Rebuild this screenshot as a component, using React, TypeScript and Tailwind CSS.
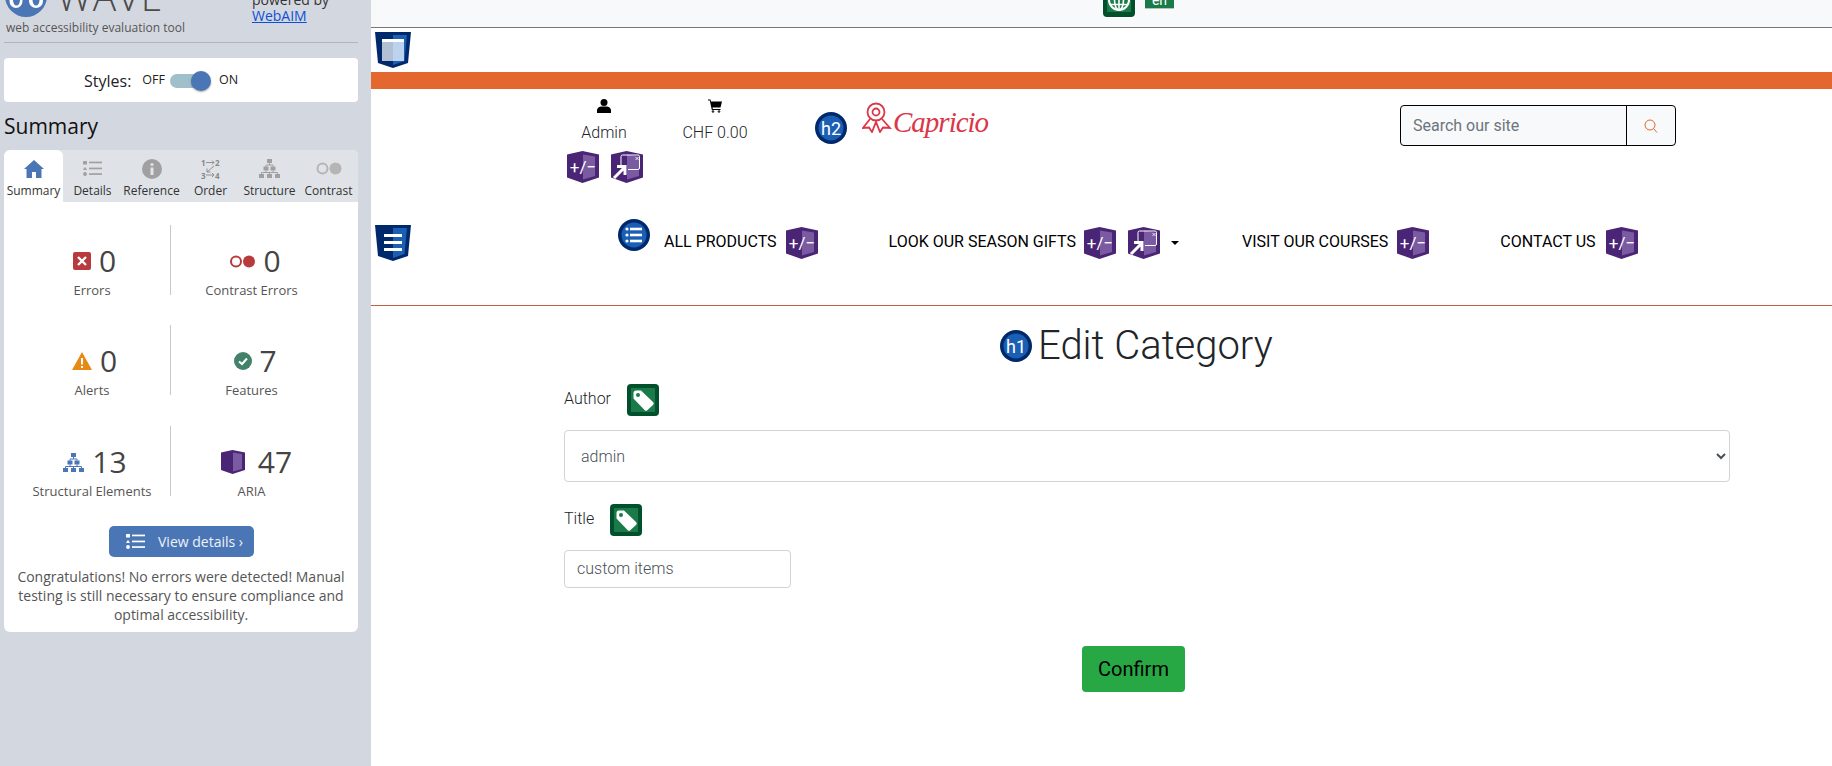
import React from "react";

function Aria({ kind = "pm" }: { kind?: "pm" | "popup" }) {
  return (
    <svg width="32" height="32" viewBox="0 0 32 32" className="shrink-0 block">
      <path d="M0 3.5 L15.5 0 L32 3.5 V26.5 L15.5 32 L0 26.5 Z" fill="#4b2575" />
      <path d="M16 3.5 L28 5.5 V25 L16 28.5 Z" fill="#7a5aa0" />
      {kind === "pm" ? (
        <text x="16" y="22" textAnchor="middle" fill="#fff" fontSize="17" fontFamily="Roboto, sans-serif">+/−</text>
      ) : (
        <g fill="none" stroke="#fff">
          <path d="M10 16 V5.5 A1.5 1.5 0 0 1 11.5 4 H27 A1.5 1.5 0 0 1 28.5 5.5 V17 A1.5 1.5 0 0 1 27 18.5 H17" strokeWidth="1" />
          <path d="M24.5 6 l3 3 M27.5 6 l-3 3" strokeWidth="0.8" />
          <path d="M3 27 L13 17 M6 15.5 H14 V24" strokeWidth="3" />
        </g>
      )}
    </svg>
  );
}

function Tag() {
  return (
    <svg width="32" height="32" viewBox="0 0 32 32" className="shrink-0 block">
      <rect width="32" height="32" rx="4" fill="#00512b" />
      <rect x="4" y="4" width="24" height="24" fill="#1a7a4a" />
      <path d="M6.5 9 A2.5 2.5 0 0 1 9 6.5 H14 L26 18 A2 2 0 0 1 26 21 L20.5 26 A2 2 0 0 1 17.5 26 L6.5 14.5 Z" fill="#fff" />
      <circle cx="11" cy="11" r="2" fill="#1a7a4a" />
    </svg>
  );
}

function HCircle({ label }: { label: string }) {
  return (
    <svg width="32" height="32" viewBox="0 0 32 32" className="shrink-0 block">
      <circle cx="16" cy="16" r="16" fill="#00296b" />
      <circle cx="16" cy="16" r="12.5" fill="#1a5fb4" />
      <text x="16" y="22.500" textAnchor="middle" fill="#fff" fontSize="18" fontFamily="Roboto, sans-serif">{label}</text>
    </svg>
  );
}

function ListCircle() {
  return (
    <svg width="32" height="32" viewBox="0 0 32 32" className="shrink-0 block">
      <circle cx="16" cy="16" r="16" fill="#00296b" />
      <circle cx="16" cy="16" r="12.5" fill="#1a5fb4" />
      <g fill="#fff">
        <circle cx="9" cy="10" r="1.6" />
        <circle cx="9" cy="16" r="1.6" />
        <circle cx="9" cy="22" r="1.6" />
        <rect x="12" y="8.7" width="12" height="2.6" />
        <rect x="12" y="14.7" width="12" height="2.6" />
        <rect x="12" y="20.7" width="12" height="2.6" />
      </g>
    </svg>
  );
}

function Landmark({ kind }: { kind: "window" | "nav" }) {
  return (
    <svg width="36" height="36" viewBox="0 0 36 36" className="shrink-0 block">
      <path d="M0 0 H36 L33 31 L18 36 L3 31 Z" fill="#00296b" />
      <path d="M18 3 H32 L29.5 29 L18 33 Z" fill="#1a5fb4" />
      {kind === "window" ? (
        <g>
          <rect x="7" y="7" width="11" height="22" fill="#b3bfd2" />
          <rect x="18" y="7" width="11" height="22" fill="#bcd3ef" />
          <rect x="7" y="7" width="22" height="3" fill="#fff" />
        </g>
      ) : (
        <g fill="#fff">
          <rect x="9" y="9" width="18" height="3" />
          <rect x="9" y="16" width="18" height="3" />
          <rect x="9" y="23" width="18" height="3" />
        </g>
      )}
    </svg>
  );
}

function ListGlyph({ color, w = 19, h = 15 }: { color: string; w?: number; h?: number }) {
  return (
    <svg width={w} height={h} viewBox="0 0 19 15" className="block">
      <g fill={color}>
        <rect x="0" y="0" width="4" height="3.4" rx="0.5" />
        <path d="M2 5.7 L4 9 H0 Z" />
        <circle cx="2" cy="13" r="1.9" />
        <rect x="6" y="0.6" width="13" height="1.7" />
        <rect x="6" y="6.6" width="13" height="1.7" />
        <rect x="6" y="12.2" width="13" height="1.7" />
      </g>
    </svg>
  );
}

function Tree({ color, w = 21, h = 19 }: { color: string; w?: number; h?: number }) {
  return (
    <svg width={w} height={h} viewBox="0 0 21 19" className="block">
      <g fill={color}>
        <rect x="8" y="0" width="5" height="4" />
        <rect x="4.5" y="7.5" width="5" height="4" />
        <rect x="11.5" y="7.5" width="5" height="4" />
        <rect x="0" y="15" width="5" height="4" />
        <rect x="8" y="15" width="5" height="4" />
        <rect x="16" y="15" width="5" height="4" />
      </g>
      <path d="M10.5 4 V6 M7 7.5 V6 H14 V7.5 M7 11.5 V13.5 M14 11.5 V13.5 M2.5 15 V13.5 H18.5 V15 M10.5 13.5 V15" stroke={color} fill="none" strokeWidth="1" />
    </svg>
  );
}

function TabItem({ label, active, icon }: { label: string; active?: boolean; icon: React.ReactNode }) {
  return (
    <div className={`w-[59px] h-[52px] flex flex-col items-center pt-[8px] ${active ? "bg-white rounded-t-[6px]" : ""}`}>
      <div className="h-[21px] flex items-center justify-center">{icon}</div>
      <div className="mt-[2px] text-[12px] leading-[20px] text-[#333] whitespace-nowrap">{label}</div>
    </div>
  );
}

function Stat({ icon, n, label, gap = 8, pl = 5 }: { icon: React.ReactNode; n: string; label: string; gap?: number; pl?: number }) {
  return (
    <div className="flex flex-col items-center h-[70px]">
      <div className="flex items-center h-[42px] mt-[15px]" style={{ gap, paddingLeft: pl }}>
        {icon}
        <span className="text-[30px] leading-[42px] text-[#444]">{n}</span>
      </div>
      <div className="text-[13px] leading-[18px] -mt-[1px] text-[#555] whitespace-nowrap">{label}</div>
    </div>
  );
}

function StatRow({ left, right }: { left: React.ReactNode; right: React.ReactNode }) {
  return (
    <div className="flex ml-[10px] h-[70px]">
      <div className="w-[157px] border-r border-[#c8c8c8] h-[70px]">{left}</div>
      <div className="w-[161px]">{right}</div>
    </div>
  );
}

function Sidebar() {
  return (
    <aside className="w-[371px] shrink-0 h-[766px] bg-[#d3d8e0] font-['Open_Sans',sans-serif] overflow-hidden">
      <div className="mx-[4px] w-[354px] h-[43px] border-b border-[#b1b6bd] overflow-hidden relative">
        <div className="flex h-[21px] items-start overflow-hidden">
          <svg width="42" height="17" viewBox="0 25 42 17" className="ml-[1px] block shrink-0">
            <circle cx="21" cy="21" r="21" fill="#4a76b5" />
            <ellipse cx="11" cy="26" rx="6.500" ry="7" fill="#fff" />
            <ellipse cx="11.500" cy="25" rx="3.500" ry="5.500" fill="#4a76b5" />
            <ellipse cx="31" cy="26" rx="7" ry="7" fill="#fff" />
            <ellipse cx="31" cy="25" rx="3.500" ry="5.500" fill="#4a76b5" />
          </svg>
          <div className="ml-[10px] -mt-[24px] text-[39px] leading-[39px] font-light tracking-[1px] text-[#4b4b4b] w-[195px] shrink-0">WAVE</div>
          <div className="-mt-[9px] ml-0 text-[14px] leading-[18px] text-[#333] whitespace-nowrap">powered by</div>
        </div>
        <div className="flex -mt-[14px]">
          <div className="ml-[2px] mt-[12px] w-[246px] shrink-0 text-[12px] leading-[18px] text-[#555] whitespace-nowrap">web accessibility evaluation tool</div>
          <div className="text-[14px] leading-[18px] text-[#0d4fd8] underline">WebAIM</div>
        </div>
      </div>

      <div className="mx-[4px] mt-[15px] h-[44px] w-[354px] bg-white rounded-[4px] flex items-center pl-[80px] pt-[1px]">
        <span className="text-[16px] text-[#222]">Styles:</span>
        <span className="ml-[11px] text-[12.5px] text-[#222]">OFF</span>
        <div className="ml-[5px] w-[31px] h-[14px] rounded-full bg-[#9fc0cb] relative">
          <div className="absolute -right-[10px] -top-[3px] w-[20px] h-[20px] rounded-full bg-[#4a76b5] shadow-[0_1px_2px_rgba(0,0,0,0.35)]" />
        </div>
        <span className="ml-[18px] text-[12.5px] text-[#222]">ON</span>
      </div>

      <h2 className="mx-[4px] mt-[9px] text-[21px] leading-[30px] text-[#111]">Summary</h2>

      <div className="mx-[4px] mt-[9px] w-[354px] h-[482px] bg-white rounded-[6px] overflow-hidden">
        <div className="flex h-[52px] bg-[#dfe3e8]">
          <TabItem
            label="Summary"
            active
            icon={
              <svg width="20" height="18" viewBox="0 0 20 18" className="block">
                <path d="M10 0 L20 9 H17.500 V18 H12 V12 H8 V18 H2.500 V9 H0 Z" fill="#4a76b5" />
              </svg>
            }
          />
          <TabItem label="Details" icon={<ListGlyph color="#a0a0a0" />} />
          <TabItem
            label="Reference"
            icon={
              <svg width="20" height="20" viewBox="0 0 20 20" className="block">
                <circle cx="10" cy="10" r="10" fill="#a0a0a0" />
                <circle cx="10" cy="5.500" r="1.600" fill="#dfe3e8" />
                <rect x="8.500" y="8.500" width="3" height="7.500" fill="#dfe3e8" />
              </svg>
            }
          />
          <TabItem
            label="Order"
            icon={
              <svg width="19" height="20" viewBox="0 0 19 20" className="block">
                <g fill="#888" fontSize="8" fontWeight="700" fontFamily="'Open Sans', sans-serif">
                  <text x="0" y="6.500">1</text>
                  <text x="14" y="6.500">2</text>
                  <text x="0" y="19.500">3</text>
                  <text x="14" y="19.500">4</text>
                </g>
                <path d="M5 3.500 H13 M11 1.500 L13 3.500 L11 5.500 M5 16 H13 M11 14 L13 16 L11 18 M13 7 L6 13 M6 9.500 V13 H9.500" stroke="#888" fill="none" strokeWidth="0.9" />
              </svg>
            }
          />
          <TabItem label="Structure" icon={<Tree color="#a0a0a0" />} />
          <TabItem
            label="Contrast"
            icon={
              <svg width="26" height="13" viewBox="0 0 26 13" className="block">
                <circle cx="6.500" cy="6.500" r="5" fill="none" stroke="#b5b5b5" strokeWidth="2" />
                <circle cx="19.500" cy="6.500" r="6" fill="#b5b5b5" />
              </svg>
            }
          />
        </div>

        <div className="mt-[23px]">
          <StatRow
            left={
              <Stat
                n="0"
                label="Errors"
                icon={
                  <svg width="18" height="18" viewBox="0 0 18 18" className="block">
                    <rect width="18" height="18" rx="2" fill="#b93a3d" />
                    <path d="M5 5 L13 13 M13 5 L5 13" stroke="#fff" strokeWidth="2.400" />
                  </svg>
                }
              />
            }
            right={
              <Stat
                n="0"
                label="Contrast Errors"
                pl={8}
                icon={
                  <svg width="25" height="13" viewBox="0 0 25 13" className="block">
                    <circle cx="6" cy="6.500" r="5" fill="none" stroke="#b93a3d" strokeWidth="2" />
                    <circle cx="19" cy="6.500" r="6" fill="#b93a3d" />
                  </svg>
                }
              />
            }
          />
          <div className="mt-[30px]">
            <StatRow
              left={
                <Stat
                  n="0"
                  label="Alerts"
                  icon={
                    <svg width="20" height="18" viewBox="0 0 20 18" className="block">
                      <path d="M10 0 L20 18 H0 Z" fill="#e68a15" />
                      <rect x="9" y="6" width="2" height="6.500" fill="#fff" />
                      <rect x="9" y="14" width="2" height="2" fill="#fff" />
                    </svg>
                  }
                />
              }
              right={
                <Stat
                  n="7"
                  label="Features"
                  gap={7}
                  pl={8}
                  icon={
                    <svg width="18" height="18" viewBox="0 0 18 18" className="block">
                      <circle cx="9" cy="9" r="9" fill="#42826a" />
                      <path d="M5 9.500 L8 12 L13 6.500" stroke="#fff" strokeWidth="2" fill="none" />
                    </svg>
                  }
                />
              }
            />
          </div>
          <div className="mt-[31px]">
            <StatRow
              left={<Stat n="13" label="Structural Elements" pl={6} icon={<Tree color="#4a76b5" />} />}
              right={
                <Stat
                  n="47"
                  label="ARIA"
                  gap={13}
                  pl={10}
                  icon={
                    <svg width="24" height="24" viewBox="0 0 24 24" className="block">
                      <path d="M0 2.500 L11.500 0 L24 2.500 V20 L11.500 24 L0 20 Z" fill="#4b2575" />
                      <path d="M12 2.500 L21 4 V19 L12 21.500 Z" fill="#7a5aa0" />
                    </svg>
                  }
                />
              }
            />
          </div>
        </div>

        <div className="mt-[30px] ml-[105px] w-[145px] h-[31px] bg-[#4a76b5] rounded-[5px] flex items-center pl-[17px] text-[14px] text-[#eef2f8]">
          <ListGlyph color="#fff" />
          <span className="ml-[13px] whitespace-nowrap">View details ›</span>
        </div>

        <p className="mt-[10px] px-[10px] text-center text-[14px] leading-[19px] text-[#555]">
          Congratulations! No errors were detected! Manual testing is still necessary to ensure compliance and optimal accessibility.
        </p>
      </div>
    </aside>
  );
}

function NavItem({ label, className = "", children }: { label: string; className?: string; children?: React.ReactNode }) {
  return (
    <div className={`flex items-center h-[32px] ${className}`}>
      <span className="text-[16px] text-black whitespace-nowrap -mt-[2px]">{label}</span>
      {children}
    </div>
  );
}

export default function App() {
  return (
    <div className="flex w-[1832px] h-[766px] overflow-hidden bg-white">
      <Sidebar />
      <main className="flex-1 min-w-0 font-['Roboto',sans-serif] text-[#212529]">
        <div className="h-[28px] bg-[#f8f9fa] border-b border-[#777] overflow-hidden flex items-start pl-[731px]">
          <svg width="34" height="18" viewBox="0 15 34 18" className="block shrink-0">
            <rect x="0" y="0" width="34" height="33" rx="5" fill="#fff" />
            <rect x="1" y="0" width="32" height="32" rx="4" fill="#00512b" />
            <rect x="5" y="4" width="24" height="23" fill="#1a7a4a" />
            <circle cx="17" cy="15" r="10" fill="none" stroke="#fff" strokeWidth="2" />
            <ellipse cx="17" cy="15" rx="4.500" ry="10" fill="none" stroke="#fff" strokeWidth="1.600" />
            <path d="M8 19.500 H26 M17 15 V25" stroke="#fff" strokeWidth="1.600" />
          </svg>
          <div className="ml-[9px] w-[29px] h-[9px] bg-[#1a7a4a] border-b border-[#b5c4bb] overflow-hidden text-white text-[14px] leading-[14px] text-center">
            <div className="-mt-[7px]">en</div>
          </div>
        </div>

        <div className="h-[44px] pl-[4px] pt-[4px]">
          <Landmark kind="window" />
        </div>

        <div className="h-[17px] bg-[#e3672f]" />

        <div className="h-[130px] flex items-start">
          <div className="ml-[196px] pt-[10px] w-[185px] shrink-0">
            <div className="flex gap-[37px]">
              <div className="w-[74px] flex flex-col items-center">
                <svg width="14" height="14" viewBox="0 0 14 14" className="block">
                  <circle cx="7" cy="3.500" r="3.500" fill="#000" />
                  <path d="M0 14 V11.500 C0 9 2.500 7.500 4.500 7.500 H9.500 C11.500 7.500 14 9 14 11.500 V14 Z" fill="#000" />
                </svg>
                <div className="mt-[8px] text-[16px] leading-[24px] font-light">Admin</div>
              </div>
              <div className="w-[74px] flex flex-col items-center">
                <svg width="14" height="14" viewBox="0 0 14 14" className="block">
                  <path d="M0 0.500 H2.500 L3 2.500 H14 L12.500 8.500 H4.500 L4.800 10 H12.500 V11 H3.800 L1.800 1.500 H0 Z" fill="#000" />
                  <circle cx="5" cy="12.500" r="1.300" fill="#333" />
                  <circle cx="11" cy="12.500" r="1.300" fill="#333" />
                </svg>
                <div className="mt-[8px] text-[16px] leading-[24px] font-light whitespace-nowrap">CHF 0.00</div>
              </div>
            </div>
            <div className="flex gap-[12px] mt-[6px]">
              <Aria />
              <Aria kind="popup" />
            </div>
          </div>

          <div className="ml-[63px] mt-[23px]">
            <HCircle label="h2" />
          </div>

          <div className="ml-[15px] mt-[13px] flex items-start w-[126px] shrink-0 text-[#dc3648]">
            <svg width="30" height="31" viewBox="0 0 30 31" className="block shrink-0" fill="none" stroke="#dc3648" strokeWidth="1.800">
              <circle cx="14" cy="10" r="8.500" />
              <circle cx="14" cy="10" r="3.500" />
              <path d="M8 17 L1 26 L7 25.500 L10 30 L14 20 L18 30 L21 25.500 L28 26 L20 17" />
            </svg>
            <span className="ml-[1px] mt-0 font-['Liberation_Serif',serif] italic text-[29px] leading-[40px] tracking-[-1px] whitespace-nowrap">Capricio</span>
          </div>

          <div className="ml-[412px] mt-[16px] w-[276px] h-[41px] border border-black rounded-[4px] bg-[#f8f9fa] flex shrink-0">
            <div className="w-[226px] border-r border-black pl-[12px] text-[16px] leading-[39px] text-[#6c757d]">Search our site</div>
            <div className="flex-1 flex items-center justify-center">
              <svg width="14" height="14" viewBox="0 0 14 14" fill="none" stroke="#e3672f" strokeWidth="1">
                <circle cx="6" cy="6" r="5" />
                <path d="M9.500 9.500 L13 13.500" />
              </svg>
            </div>
          </div>
        </div>

        <div className="h-[87px] border-b border-[#c0623d] flex items-start">
          <div className="ml-[4px] mt-[6px]">
            <Landmark kind="nav" />
          </div>
          <div className="ml-[207px]">
            <ListCircle />
          </div>
          <div className="mt-[8px] flex items-start">
            <NavItem label="ALL PRODUCTS" className="ml-[14px]">
              <span className="ml-[9px]"><Aria /></span>
            </NavItem>
            <NavItem label="LOOK OUR SEASON GIFTS" className="ml-[71px]">
              <span className="ml-[8px]"><Aria /></span>
              <span className="ml-[12px]"><Aria kind="popup" /></span>
              <span className="ml-[11px] w-0 h-0 border-x-[4px] border-x-transparent border-t-[4px] border-t-black" />
            </NavItem>
            <NavItem label="VISIT OUR COURSES" className="ml-[63px]">
              <span className="ml-[9px]"><Aria /></span>
            </NavItem>
            <NavItem label="CONTACT US" className="ml-[71px]">
              <span className="ml-[10px]"><Aria /></span>
            </NavItem>
          </div>
        </div>

        <div className="ml-[629px] mt-[24px] flex items-center h-[32px]">
          <HCircle label="h1" />
          <h1 className="ml-[6px] text-[40px] leading-[48px] font-light whitespace-nowrap text-[#212529]">Edit Category</h1>
        </div>

        <div className="ml-[193px] w-[1166px] mt-[22px]">
          <div className="flex items-center h-[32px]">
            <span className="text-[16px] font-light -mt-[2px]">Author</span>
            <span className="ml-[16px]"><Tag /></span>
          </div>
          <select
            defaultValue="admin"
            className="mt-[14px] block w-full h-[52px] border border-[#ced4da] rounded-[4px] bg-white pl-[12px] text-[16px] font-light text-[#495057]"
          >
            <option value="admin">admin</option>
          </select>
          <div className="flex items-center h-[32px] mt-[22px]">
            <span className="text-[16px] font-light -mt-[2px]">Title</span>
            <span className="ml-[16px]"><Tag /></span>
          </div>
          <input
            readOnly
            value="custom items"
            className="mt-[14px] block w-[227px] h-[38px] border border-[#ced4da] rounded-[4px] bg-white px-[12px] pb-[2px] text-[16px] font-light text-[#495057]"
          />
        </div>

        <div className="ml-[711px] mt-[58px] w-[103px] h-[46px] rounded-[4px] bg-[#28a745] flex items-center justify-center text-[20px] text-black">
          Confirm
        </div>
      </main>
    </div>
  );
}
